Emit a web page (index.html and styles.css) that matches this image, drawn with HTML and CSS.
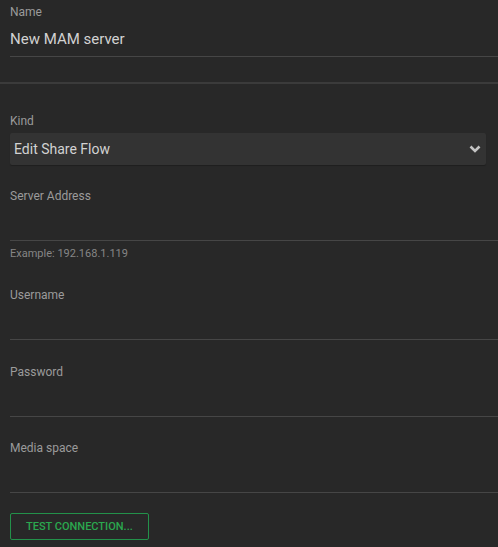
FILE: index.html
```html
<!DOCTYPE html>
<html>
<head>
<meta charset="utf-8">
<link rel="stylesheet" href="styles.css">
</head>
<body>
  <section class="form form-top">
    <div class="field">
      <label class="label">Name</label>
      <div class="input value">New MAM server</div>
    </div>
  </section>
  <div class="divider"></div>
  <section class="form form-main">
    <div class="field field-kind">
      <label class="label">Kind</label>
      <div class="select">
        <span>Edit Share Flow</span>
        <svg class="chevron" width="12" height="8" viewBox="0 0 12 8"><polyline points="1.5,1.5 6,6 10.5,1.5" fill="none" stroke="#c4c4c4" stroke-width="2.6"/></svg>
      </div>
    </div>
    <div class="field">
      <label class="label">Server Address</label>
      <div class="input"></div>
      <div class="hint">Example: 192.168.1.119</div>
    </div>
    <div class="field">
      <label class="label">Username</label>
      <div class="input"></div>
    </div>
    <div class="field field-password">
      <label class="label">Password</label>
      <div class="input"></div>
    </div>
    <div class="field">
      <label class="label">Media space</label>
      <div class="input"></div>
    </div>
    <button class="btn">TEST CONNECTION...</button>
  </section>
</body>
</html>
```
FILE: styles.css
```css
html, body {
  margin: 0;
  padding: 0;
  background: #282828;
  font-family: Roboto, "Noto Sans", sans-serif;
  height: 100%;
}
.form {
  padding-left: 10px;
  display: flex;
  flex-direction: column;
}
.form-top {
  padding-top: 5px;
}
.field {
  display: flex;
  flex-direction: column;
}
.label {
  font-size: 12px;
  line-height: 14px;
  color: #9b9b9b;
}
.input {
  height: 37px;
  border-bottom: 1px solid #464646;
  box-sizing: content-box;
}
.value {
  font-size: 15px;
  line-height: 20px;
  color: #d2d2d2;
  padding-top: 10px;
  height: 27px;
}
.divider {
  height: 2px;
  background: #3b3b3b;
  margin-top: 25px;
}
.form-main {
  padding-top: 30px;
  gap: 24px;
}
.field-kind .label {
  margin-bottom: 5px;
}
.field-password {
  margin-top: 1px;
}
.select {
  margin-right: 12px;
  height: 32px;
  background: #333333;
  border-radius: 2px;
  box-shadow: 0 1px 1px rgba(0,0,0,0.25);
  display: flex;
  align-items: center;
  justify-content: space-between;
  padding: 0 4px 0 4px;
  font-size: 14px;
  color: #d2d2d2;
}
.chevron {
  margin-right: 1px;
}
.hint {
  font-size: 11px;
  line-height: 14px;
  color: #868686;
  margin-top: 6px;
  margin-bottom: 3px;
}
.btn {
  align-self: flex-start;
  margin-top: -4px;
  height: 27px;
  padding: 0 15px;
  background: transparent;
  border: 1px solid #23914a;
  border-radius: 2px;
  color: #2ba84f;
  font-family: Roboto, sans-serif;
  font-size: 11px;
  font-weight: 500;
}
```
